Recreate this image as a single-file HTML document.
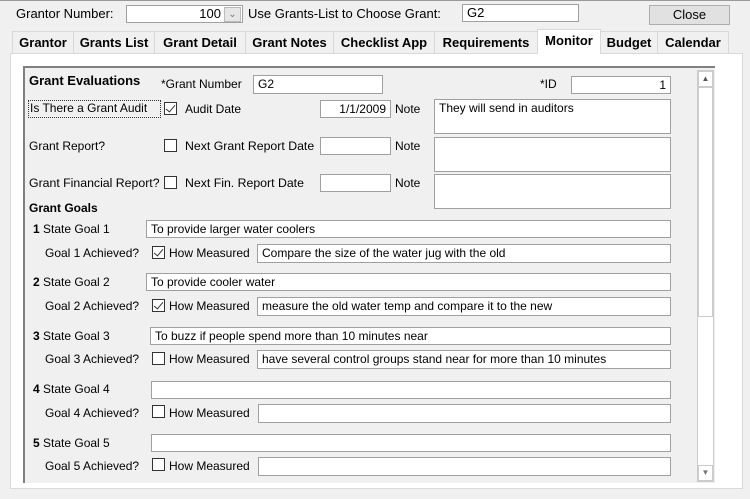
<!DOCTYPE html>
<html><head><style>
*{box-sizing:border-box;margin:0;padding:0}
body{width:750px;height:499px;background:#f0f0f0;font-family:"Liberation Sans",Arial,sans-serif;font-size:12px;color:#000;position:relative;overflow:hidden}
.a{position:absolute;white-space:nowrap}
.in{position:absolute;background:#fff;border:1px solid #a0a0a0;padding:1px 4px;font-size:12px;line-height:14px;overflow:hidden;white-space:nowrap}
.cb{position:absolute;width:13px;height:13px;border:1px solid #333;background:#fff}
.cb.k::after{content:"";position:absolute;left:3px;top:0px;width:4px;height:8px;border:solid #333;border-width:0 1.5px 1.5px 0;transform:rotate(40deg)}
.tab{position:absolute;top:31px;height:22px;border:1px solid #d9d9d9;border-bottom:none;background:#f0f0f0;font-weight:bold;font-size:13px;text-align:center;line-height:22px}
.b{font-weight:bold}
.t{font-size:13px}
</style></head><body>
<div class="a" style="left:0;top:0;width:750px;height:1px;background:#999"></div>
<div class="a t" style="left:16px;top:6px">Grantor Number:</div>
<div class="in t" style="left:126px;top:5px;width:117px;height:18px;text-align:right;padding-right:21px">100</div>
<div class="a" style="left:224px;top:7px;width:17px;height:15px;background:#e6e6e6;border:1px solid #bbb;color:#777;font-size:10px;text-align:center;line-height:13px">&#8964;</div>
<div class="a t" style="left:248px;top:6px">Use Grants-List to Choose Grant:</div>
<div class="in t" style="left:462px;top:4px;width:117px;height:18px">G2</div>
<div class="a" style="left:649px;top:5px;width:81px;height:20px;background:#e1e1e1;border:1px solid #adadad;text-align:center;line-height:18px;font-size:13px">Close</div>

<div class="a" style="left:10px;top:53px;width:733px;height:436px;background:#fff;border:1px solid #d9d9d9"></div>
<div class="tab" style="left:12px;width:62px">Grantor</div>
<div class="tab" style="left:73px;width:82px">Grants List</div>
<div class="tab" style="left:154px;width:92px">Grant Detail</div>
<div class="tab" style="left:245px;width:89px">Grant Notes</div>
<div class="tab" style="left:333px;width:102px">Checklist App</div>
<div class="tab" style="left:434px;width:104px">Requirements</div>
<div class="tab" style="left:537px;top:29px;height:25px;width:64px;background:#fff;line-height:22px">Monitor</div>
<div class="tab" style="left:600px;width:58px">Budget</div>
<div class="tab" style="left:657px;width:72px">Calendar</div>

<div class="a" style="left:23px;top:66px;width:692px;height:417px;background:#f0f0f0;border-left:2px solid #808080;border-top:2px solid #808080"></div>
<div class="a" style="left:697px;top:70px;width:17px;height:412px;background:#fff;border:1px solid #ccc"></div>
<div class="a" style="left:698px;top:71px;width:15px;height:16px;border:1px solid #ccc;font-size:8px;color:#555;text-align:center;line-height:14px">&#9650;</div>
<div class="a" style="left:698px;top:87px;width:15px;height:230px;border:1px solid #ccc;background:#fff"></div>
<div class="a" style="left:698px;top:465px;width:15px;height:16px;border:1px solid #ccc;font-size:8px;color:#777;text-align:center;line-height:14px">&#9660;</div>

<div class="a b" style="left:29px;top:73px;font-size:13px">Grant Evaluations</div>
<div class="a" style="left:161px;top:77px">*Grant Number</div>
<div class="in" style="left:253px;top:75px;width:130px;height:19px">G2</div>
<div class="a" style="left:540px;top:77px">*ID</div>
<div class="in" style="left:571px;top:76px;width:100px;height:18px;text-align:right">1</div>

<div class="a" style="left:28px;top:100px;width:133px;height:18px;border:1px dotted #333;line-height:15px;padding-left:1px">Is There a Grant Audit</div>
<div class="cb k" style="left:164px;top:102px"></div>
<div class="a" style="left:185px;top:102px">Audit Date</div>
<div class="in" style="left:320px;top:100px;width:71px;height:18px;text-align:right">1/1/2009</div>
<div class="a" style="left:395px;top:102px">Note</div>
<div class="in" style="left:434px;top:99px;width:237px;height:35px">They will send in auditors</div>

<div class="a" style="left:29px;top:139px">Grant Report?</div>
<div class="cb" style="left:164px;top:139px"></div>
<div class="a" style="left:185px;top:139px;font-size:12.3px">Next Grant Report Date</div>
<div class="in" style="left:320px;top:137px;width:71px;height:18px"></div>
<div class="a" style="left:395px;top:139px">Note</div>
<div class="in" style="left:434px;top:137px;width:237px;height:35px"></div>

<div class="a" style="left:29px;top:176px;width:133px;overflow:hidden;font-size:12.3px">Grant Financial Report?</div>
<div class="cb" style="left:164px;top:176px"></div>
<div class="a" style="left:185px;top:176px;font-size:12.3px">Next Fin. Report Date</div>
<div class="in" style="left:320px;top:174px;width:71px;height:18px"></div>
<div class="a" style="left:395px;top:176px">Note</div>
<div class="in" style="left:434px;top:174px;width:237px;height:35px"></div>

<div class="a b" style="left:29px;top:201px">Grant Goals</div>

<div class="a" style="left:33px;top:222px"><b>1</b> State Goal 1</div>
<div class="in" style="left:146px;top:220px;width:525px;height:18px">To provide larger water coolers</div>
<div class="a" style="left:45px;top:246px">Goal 1 Achieved?</div>
<div class="cb k" style="left:152px;top:246px"></div>
<div class="a" style="left:169px;top:246px">How Measured</div>
<div class="in" style="left:257px;top:244px;width:414px;height:19px">Compare the size of the water jug with the old</div>

<div class="a" style="left:33px;top:275px"><b>2</b> State Goal 2</div>
<div class="in" style="left:146px;top:273px;width:525px;height:18px">To provide cooler water</div>
<div class="a" style="left:45px;top:299px">Goal 2 Achieved?</div>
<div class="cb k" style="left:152px;top:299px"></div>
<div class="a" style="left:169px;top:299px">How Measured</div>
<div class="in" style="left:257px;top:297px;width:414px;height:19px">measure the old water temp and compare it to the new</div>

<div class="a" style="left:33px;top:329px"><b>3</b> State Goal 3</div>
<div class="in" style="left:150px;top:327px;width:521px;height:18px">To buzz if people spend more than 10 minutes near</div>
<div class="a" style="left:45px;top:352px">Goal 3 Achieved?</div>
<div class="cb" style="left:152px;top:352px"></div>
<div class="a" style="left:169px;top:352px">How Measured</div>
<div class="in" style="left:257px;top:350px;width:414px;height:19px">have several control groups stand near for more than 10 minutes</div>

<div class="a" style="left:33px;top:382px"><b>4</b> State Goal 4</div>
<div class="in" style="left:151px;top:381px;width:520px;height:18px"></div>
<div class="a" style="left:45px;top:406px">Goal 4 Achieved?</div>
<div class="cb" style="left:152px;top:405px"></div>
<div class="a" style="left:169px;top:406px">How Measured</div>
<div class="in" style="left:258px;top:404px;width:413px;height:19px"></div>

<div class="a" style="left:33px;top:436px"><b>5</b> State Goal 5</div>
<div class="in" style="left:151px;top:434px;width:520px;height:18px"></div>
<div class="a" style="left:45px;top:459px">Goal 5 Achieved?</div>
<div class="cb" style="left:152px;top:458px"></div>
<div class="a" style="left:169px;top:459px">How Measured</div>
<div class="in" style="left:258px;top:457px;width:413px;height:19px"></div>
</body></html>
